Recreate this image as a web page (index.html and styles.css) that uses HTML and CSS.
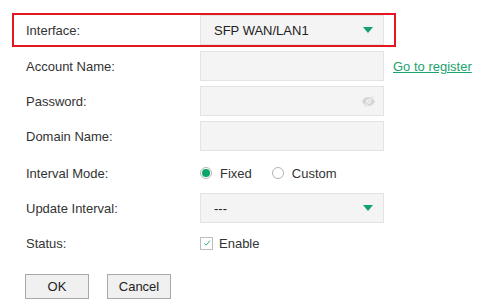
FILE: index.html
```html
<!DOCTYPE html>
<html lang="en">
<head>
  <meta charset="UTF-8">
  <title>DDNS</title>
  <link rel="stylesheet" href="styles.css">
</head>
<body>
  <div class="form">
    <!-- highlighted row -->
    <div class="row highlight">
      <span class="label">Interface:</span>
      <div class="field select">
        <span>SFP WAN/LAN1</span>
        <span class="arrow"></span>
      </div>
    </div>

    <div class="row first">
      <span class="label">Account Name:</span>
      <div class="field"></div>
      <a class="link" href="#">Go to register</a>
    </div>

    <div class="row">
      <span class="label">Password:</span>
      <div class="field password">
        <svg class="eye" width="15" height="11" viewBox="0 0 15 11">
          <path d="M1 5.5 C3 2 5 1 7.5 1 C10 1 12 2 14 5.5 C12 9 10 10 7.5 10 C5 10 3 9 1 5.5 Z" fill="#d4d4d4"/>
          <circle cx="7.5" cy="5.5" r="2.3" fill="#f4f4f4"/>
          <path d="M3.5 10.5 L12 0.5" stroke="#f4f4f4" stroke-width="2.4"/>
          <path d="M3.5 10.5 L12 0.5" stroke="#d4d4d4" stroke-width="1.1"/>
        </svg>
      </div>
    </div>

    <div class="row">
      <span class="label">Domain Name:</span>
      <div class="field"></div>
    </div>

    <div class="row plain">
      <span class="label">Interval Mode:</span>
      <span class="radio checked"></span>
      <span class="opt">Fixed</span>
      <span class="radio"></span>
      <span class="opt">Custom</span>
    </div>

    <div class="row">
      <span class="label">Update Interval:</span>
      <div class="field select">
        <span>---</span>
        <span class="arrow"></span>
      </div>
    </div>

    <div class="row plain status">
      <span class="label">Status:</span>
      <span class="check">
        <svg width="10" height="10" viewBox="0 0 10 10">
          <path d="M2.2 5.3 L4.2 7.2 L8 2.6" fill="none" stroke="#3bb083" stroke-width="1"/>
        </svg>
      </span>
      <span class="opt">Enable</span>
    </div>

    <div class="buttons">
      <button>OK</button>
      <button>Cancel</button>
    </div>
  </div>
</body>
</html>
```

FILE: styles.css
```css
body {
  margin: 0;
  font-family: "Liberation Sans", Arial, sans-serif;
  font-size: 13px;
  color: #333;
  background: #fff;
}

.form {
  padding: 13px 0 0 26px;
}

.row {
  display: flex;
  align-items: center;
  height: 30px;
  margin-top: 5px;
}

.row.first {
  margin-top: 4px;
}

.row.plain {
  padding-top: 2px;
  height: 30px;
}

.row.status {
  padding-top: 0;
  height: 30px;
}

.highlight {
  margin: 0 0 0 -14px;
  padding-left: 12px;
  width: 368px;
  border: 2px solid #e5161f;
}

.label {
  width: 174px;
  flex-shrink: 0;
}

.field {
  width: 182px;
  height: 28px;
  background: #f4f4f4;
  border: 1px solid #e3e3e3;
  display: flex;
  align-items: center;
  flex-shrink: 0;
}

.select {
  justify-content: space-between;
  padding: 0 10px 0 13px;
  width: 159px;
  color: #222;
}

.arrow {
  width: 0;
  height: 0;
  border-left: 5px solid transparent;
  border-right: 5px solid transparent;
  border-top: 6px solid #14a06f;
}

.password {
  justify-content: flex-end;
}

.eye {
  margin-right: 7px;
}

.link {
  margin-left: 9px;
  color: #1aa36c;
  text-decoration: underline;
}

.radio {
  width: 10px;
  height: 10px;
  border: 1px solid #b4b4b4;
  border-radius: 50%;
  background: #fff;
  margin-right: 8px;
  position: relative;
}

.radio.checked::after {
  content: "";
  position: absolute;
  left: 1px;
  top: 1px;
  width: 8px;
  height: 8px;
  border-radius: 50%;
  background: #0ba469;
}

.opt {
  margin-right: 20px;
}

.check {
  width: 11px;
  height: 11px;
  border: 1px solid #bdbdbd;
  margin-right: 6px;
  display: flex;
  align-items: center;
  justify-content: center;
}

.buttons {
  display: flex;
  gap: 18px;
  margin-top: 16px;
  margin-left: -1px;
}

button {
  width: 64px;
  height: 25px;
  font-family: "Liberation Sans", Arial, sans-serif;
  font-size: 13px;
  color: #222;
  background: #f0f0f0;
  border: 1px solid #a8a8a8;
  padding: 0;
}
```
